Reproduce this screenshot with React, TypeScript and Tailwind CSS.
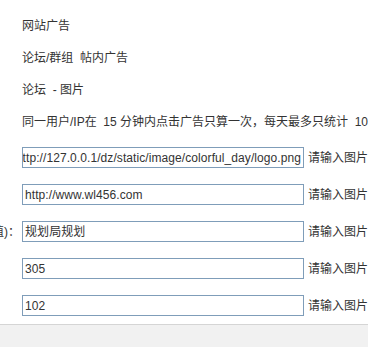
import React from "react";

const font = { fontFamily: '"Liberation Sans", Arial, "Noto Sans CJK SC", sans-serif' };

function InputRow({ value, label, scroll }: { value: string; label?: string; scroll?: boolean }) {
  return (
    <div className="flex h-[37px] items-start pt-[9px]">
      <div className="flex h-[21px] w-[22px] shrink-0 items-center justify-end overflow-hidden pr-[2px]">
        {label ? <span className="whitespace-nowrap text-[12px] text-[#333]">{label}</span> : null}
      </div>
      <div
        className={`flex h-[21px] w-[282px] shrink-0 items-center overflow-hidden border border-[#7f9db9] bg-white px-[2px] ${
          scroll ? "justify-end" : "justify-start"
        }`}
      >
        <span className="whitespace-nowrap text-[12px] leading-none tracking-[0.08px] text-[#333]">{value}</span>
      </div>
      <div className="flex h-[21px] items-center pl-[4px]">
        <span className="whitespace-nowrap text-[12px] text-[#333]">请输入图片</span>
      </div>
    </div>
  );
}

export default function App() {
  return (
    <div className="h-[347px] w-[368px] overflow-hidden bg-white" style={font}>
      <div className="h-[324px] pt-[10px]">
        <div className="flex h-[32px] items-center pl-[22px] text-[12px] text-[#333]">网站广告</div>
        <div className="flex h-[32px] items-center pl-[22px] text-[12px] text-[#333] whitespace-pre">论坛/群组  帖内广告</div>
        <div className="flex h-[32px] items-center pl-[22px] text-[12px] text-[#333] whitespace-pre">论坛  - 图片</div>
        <div className="flex h-[32px] items-center overflow-hidden pl-[22px] text-[12px] text-[#333] whitespace-pre">
          同一用户/IP在  15 分钟内点击广告只算一次，每天最多只统计  10 次
        </div>
        <InputRow value="http://127.0.0.1/dz/static/image/colorful_day/logo.png" scroll />
        <InputRow value="http://www.wl456.com" />
        <InputRow value="规划局规划" label="认值)：" />
        <InputRow value="305" />
        <InputRow value="102" />
      </div>
      <div className="h-[23px] border-t border-[#d5d5d5] bg-[#f1f1f1]" />
    </div>
  );
}
